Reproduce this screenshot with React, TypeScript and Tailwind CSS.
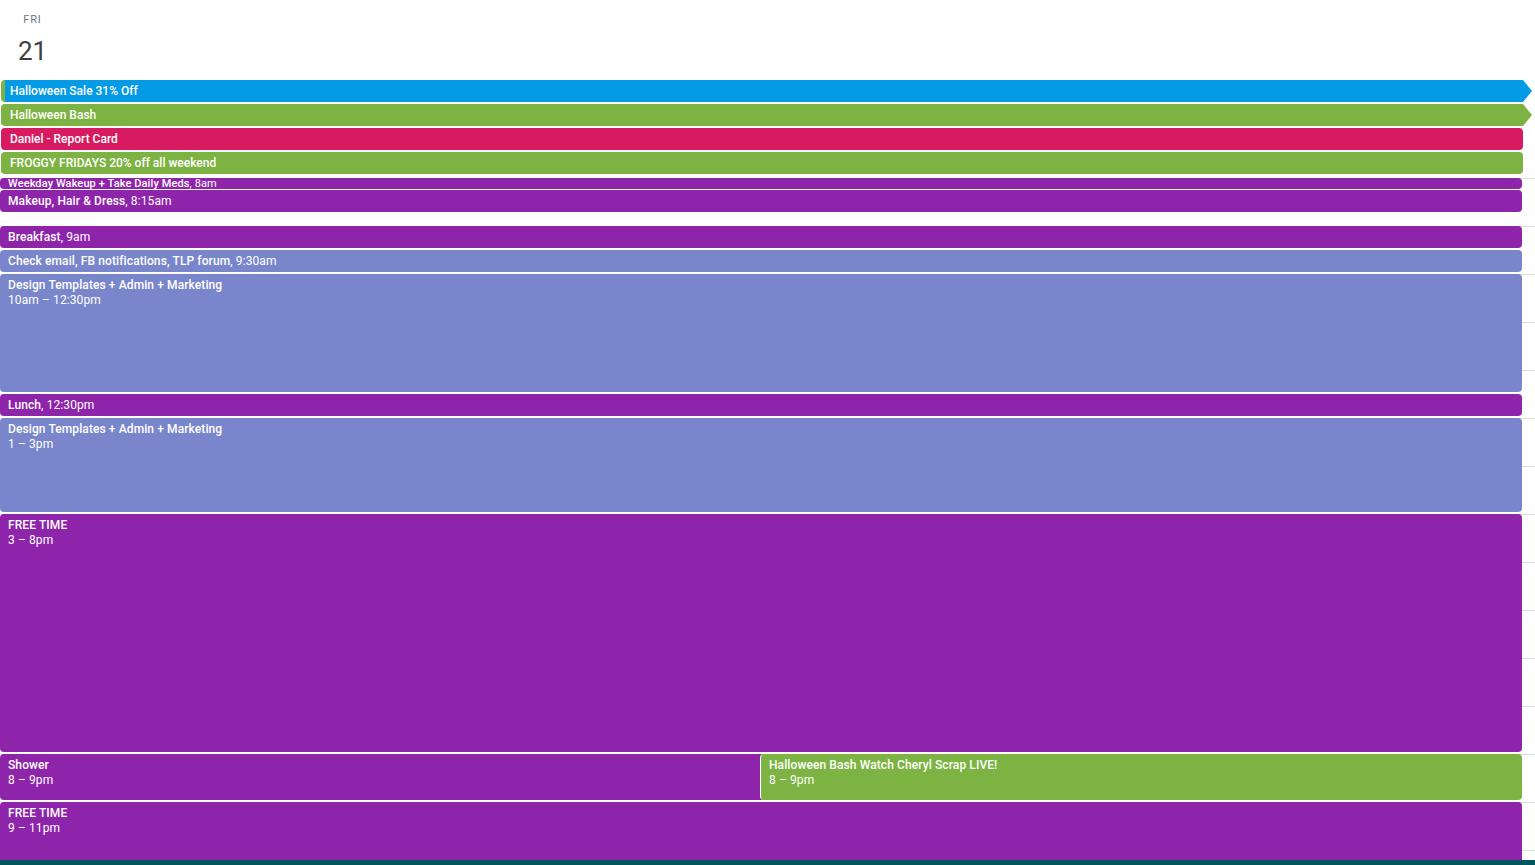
const allDay = [
  { title: 'Halloween Sale 31% Off', color: 'bg-[#039be5]', more: true, strip: true },
  { title: 'Halloween Bash', color: 'bg-[#7cb342]', more: true, strip: false },
  { title: 'Daniel - Report Card', color: 'bg-[#d81b60]', more: false, strip: false },
  { title: 'FROGGY FRIDAYS 20% off all weekend', color: 'bg-[#7cb342]', more: false, strip: false },
];

function Block({ title, time, color, className }: { title: string; time: string; color: string; className: string }) {
  return (
    <div className={`${color} ${className} rounded-[4px] px-2 pt-[4px] text-white text-[12px] leading-[15px] tracking-[0.1px] overflow-hidden`}>
      <div className="font-medium whitespace-nowrap">{title}</div>
      <div className="whitespace-nowrap">{time}</div>
    </div>
  );
}

function Inline({ title, time, color, className }: { title: string; time: string; color: string; className?: string }) {
  return (
    <div className={`${color} ${className ?? ''} h-[22px] rounded-[4px] px-2 text-white text-[12px] leading-[22px] tracking-[0.1px] whitespace-nowrap overflow-hidden`}>
      <span className="font-medium">{title}</span>, {time}
    </div>
  );
}

export default function App() {
  return (
    <div className="h-[865px] w-full overflow-hidden bg-white flex flex-col font-['Roboto',sans-serif]">
      {/* day header */}
      <div className="h-[80px] shrink-0 w-[65px] flex flex-col items-center">
        <div className="mt-[13px] text-[11px] leading-[13px] tracking-[0.8px] text-[#70757a]">FRI</div>
        <div className="mt-[9px] text-[26px] leading-[32px] text-[#3c4043]">21</div>
      </div>

      {/* all day events */}
      <div className="h-[98px] shrink-0 flex flex-col gap-[2px] pl-px">
        {allDay.map((e) => (
          <div key={e.title} className="flex w-[1531px] h-[22px]">
            <div
              className={`${e.color} ${e.more ? 'rounded-l-[4px]' : 'rounded-[4px]'} w-[1522px] h-[22px] pl-[9px] text-white text-[12px] leading-[22px] font-medium whitespace-nowrap overflow-hidden ${e.strip ? 'border-l-4 border-[#7cb342] !pl-[5px]' : ''}`}
            >
              {e.title}
            </div>
            {e.more && (
              <div
                className={`w-0 h-0 border-y-[11px] border-y-transparent border-l-[9px] ${e.color === 'bg-[#039be5]' ? 'border-l-[#039be5]' : 'border-l-[#7cb342]'}`}
              />
            )}
          </div>
        ))}
      </div>

      {/* time grid */}
      <div className="flex-1 min-h-0 overflow-hidden bg-[repeating-linear-gradient(to_bottom,#dadce0_0,#dadce0_1px,transparent_1px,transparent_48px)]">
        <div className="w-[1522px] flex flex-col">
          <div className="h-[11px] bg-[#8e24aa] rounded-[4px] px-2 text-white text-[11px] leading-[11px] tracking-[0.11px] whitespace-nowrap overflow-hidden">
            <span className="font-medium">Weekday Wakeup + Take Daily Meds</span>, 8am
          </div>
          <Inline title="Makeup, Hair & Dress" time="8:15am" color="bg-[#8e24aa]" className="mt-px" />
          <Inline title="Breakfast" time="9am" color="bg-[#8e24aa]" className="mt-[14px]" />
          <Inline title="Check email, FB notifications, TLP forum" time="9:30am" color="bg-[#7986cb]" className="mt-[2px]" />
          <Block title="Design Templates + Admin + Marketing" time="10am – 12:30pm" color="bg-[#7986cb]" className="h-[118px] mt-[2px]" />
          <Inline title="Lunch" time="12:30pm" color="bg-[#8e24aa]" className="mt-[2px]" />
          <Block title="Design Templates + Admin + Marketing" time="1 – 3pm" color="bg-[#7986cb]" className="h-[94px] mt-[2px]" />
          <Block title="FREE TIME" time="3 – 8pm" color="bg-[#8e24aa]" className="h-[238px] mt-[2px]" />
          <div className="flex mt-[2px]">
            <Block title="Shower" time="8 – 9pm" color="bg-[#8e24aa]" className="h-[46px] w-[770px] shrink-0" />
            <Block title="Halloween Bash Watch Cheryl Scrap LIVE!" time="8 – 9pm" color="bg-[#7cb342]" className="h-[46px] flex-1 -ml-[10px] z-10 border-l border-white" />
          </div>
          <Block title="FREE TIME" time="9 – 11pm" color="bg-[#8e24aa]" className="h-[70px] mt-[2px] !rounded-b-none" />
        </div>
      </div>

      <div className="h-[5px] shrink-0 bg-[#00575f]" />
    </div>
  );
}
